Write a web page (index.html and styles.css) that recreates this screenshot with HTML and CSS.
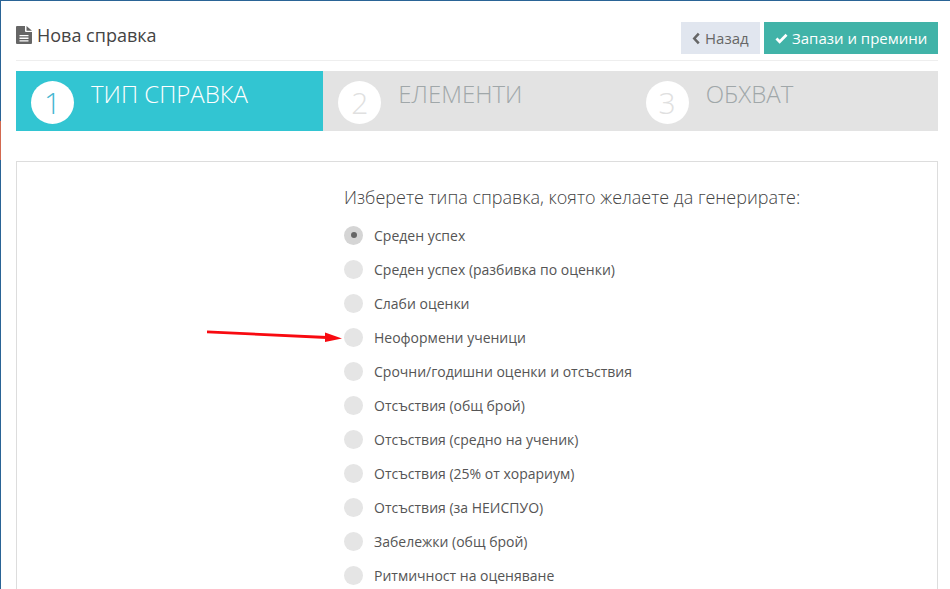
FILE: index.html
```html
<!DOCTYPE html>
<html lang="bg">
<head>
<meta charset="utf-8">
<title>Нова справка</title>
<link rel="stylesheet" href="styles.css">
</head>
<body>
<div class="frame">
  <span class="edge-mark"></span>
  <header class="page-head">
    <h1 class="title">
      <svg class="doc-icon" viewBox="0 0 16 18" aria-hidden="true"><path fill-rule="evenodd" d="M0 1a1 1 0 0 1 1-1h8v5a1 1 0 0 0 1 1h6v11a1 1 0 0 1-1 1H1a1 1 0 0 1-1-1zM3.500 9v1.300h9V9zm0 2.600v1.300h9v-1.300zm0 2.600v1.300h9v-1.300z"/><path d="M10.500 0 16 4.800h-5.500z"/></svg>
      <span>Нова справка</span>
    </h1>
    <div class="actions">
      <button class="btn btn-back"><svg class="btn-icon" viewBox="0 0 10 14" aria-hidden="true"><path d="M7.500 1.500 2.500 7l5 5.500" fill="none" stroke="currentColor" stroke-width="2.800"/></svg>Назад</button>
      <button class="btn btn-save"><svg class="btn-icon check" viewBox="0 0 14 12" aria-hidden="true"><path d="M1.500 6 5 9.500 12.500 2" fill="none" stroke="currentColor" stroke-width="3"/></svg>Запази и премини</button>
    </div>
  </header>
  <ol class="steps">
    <li class="step active"><span class="num">1</span><span class="step-name">ТИП СПРАВКА</span></li>
    <li class="step"><span class="num">2</span><span class="step-name">ЕЛЕМЕНТИ</span></li>
    <li class="step"><span class="num">3</span><span class="step-name">ОБХВАТ</span></li>
  </ol>
  <section class="panel">
    <h2 class="question">Изберете типа справка, която желаете да генерирате:</h2>
    <ul class="options">
      <li class="option selected"><span class="radio"></span>Среден успех</li>
      <li class="option"><span class="radio"></span>Среден успех (разбивка по оценки)</li>
      <li class="option"><span class="radio"></span>Слаби оценки</li>
      <li class="option"><span class="radio"></span>Неоформени ученици</li>
      <li class="option"><span class="radio"></span>Срочни/годишни оценки и отсъствия</li>
      <li class="option"><span class="radio"></span>Отсъствия (общ брой)</li>
      <li class="option"><span class="radio"></span>Отсъствия (средно на ученик)</li>
      <li class="option"><span class="radio"></span>Отсъствия (25% от хорариум)</li>
      <li class="option"><span class="radio"></span>Отсъствия (за НЕИСПУО)</li>
      <li class="option"><span class="radio"></span>Забележки (общ брой)</li>
      <li class="option"><span class="radio"></span>Ритмичност на оценяване</li>
    </ul>
  </section>
  <svg class="arrow" viewBox="0 0 136 14" aria-hidden="true"><path d="M0 4.300 120 10" stroke="#f80a10" stroke-width="2.800" fill="none"/><path d="M135 11 118 5 118 14.500z" fill="#f80a10"/></svg>
</div>
</body>
</html>
```
FILE: styles.css
```css
* { box-sizing: border-box; }
html, body { margin: 0; height: 100%; overflow: hidden; background: #fff; }
.frame {
  position: relative;
  height: 589px;
  padding: 21px 12px 0 15px;
  border-top: 1px solid #2a6496;
  border-left: 1px solid #2a6496;
  font-family: "Open Sans", sans-serif;
  color: #444;
}
.edge-mark {
  position: absolute;
  left: -1px; top: 120px;
  width: 1px; height: 39px;
  background: #d2694f;
}
.page-head {
  display: flex;
  justify-content: space-between;
  align-items: flex-start;
  height: 39px;
  border-bottom: 1px solid #eee;
}
.title {
  display: flex;
  align-items: center;
  gap: 5px;
  margin: 1px 0 0;
  font-size: 18px;
  font-weight: 400;
  line-height: 24px;
  color: #444;
}
.doc-icon { width: 16px; height: 18px; fill: #666; }
.actions { display: flex; gap: 4px; }
.btn {
  display: flex;
  align-items: center;
  height: 32px;
  border: 0;
  padding: 0 11px;
  font: 400 15px "Open Sans", sans-serif;
  white-space: nowrap;
}
.btn-back { width: 79px; background: #e1e6ef; color: #666; }
.btn-save { width: 174px; background: #41b3a8; color: #fff; }
.btn-icon { width: 9px; height: 13px; margin-right: 4px; flex: none; }
.check { width: 13px; height: 11px; margin-right: 4px; }
.steps {
  display: grid;
  grid-template-columns: repeat(3, 1fr);
  height: 60px;
  margin: 10px 0 0;
  padding: 0;
  list-style: none;
  background: #e3e3e3;
}
.step {
  display: flex;
  gap: 17px;
  padding: 10px 15px 0;
  color: #a0a7a9;
}
.step.active { background: #32c5d2; color: #fff; }
.num {
  width: 43px; height: 43px;
  border-radius: 50%;
  background: #fff;
  color: #e0e0e0;
  font-size: 30px;
  font-weight: 300;
  line-height: 43px;
  text-align: center;
  flex: none;
}
.active .num { color: #44b6d0; }
.step-name {
  font-size: 24px;
  font-weight: 300;
  line-height: 28px;
  margin-top: -1px;
}
.panel {
  height: 440px;
  margin-top: 30px;
  padding: 21px 0 0 327px;
  border: 1px solid #ddd;
}
.question {
  margin: 0 0 7px;
  font-size: 18px;
  font-weight: 300;
  line-height: 28px;
  color: #444;
}
.options { margin: 0; padding: 0; list-style: none; }
.option {
  display: flex;
  align-items: center;
  gap: 11px;
  height: 34px;
  font-size: 14px;
  color: #555;
}
.radio {
  position: relative;
  width: 19px; height: 19px;
  border-radius: 50%;
  background: #e5e5e5;
  flex: none;
}
.selected .radio { background: #d5d5d5; }
.selected .radio::after {
  content: "";
  position: absolute;
  left: 6.500px; top: 6.500px;
  width: 6px; height: 6px;
  border-radius: 50%;
  background: #666;
}
.arrow {
  position: absolute;
  left: 206px; top: 326px;
  width: 136px; height: 15px;
}
```
